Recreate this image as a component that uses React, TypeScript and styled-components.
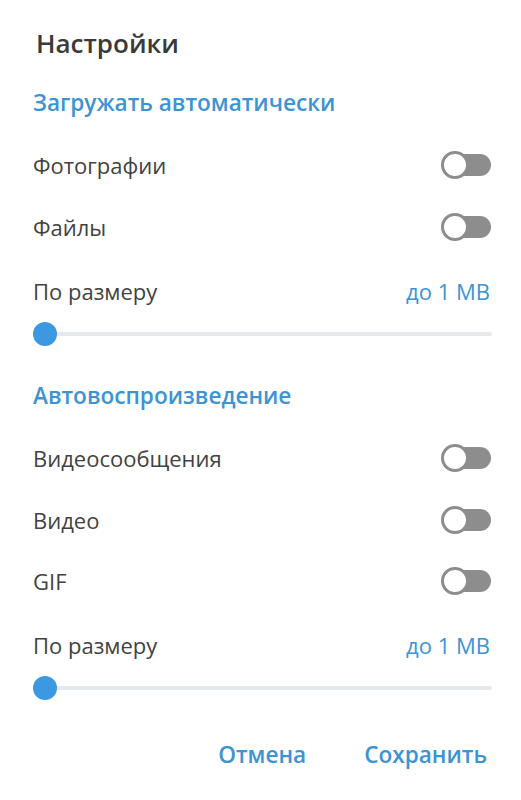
import React, { useState } from "react";
import styled, { createGlobalStyle } from "styled-components";

const GlobalStyle = createGlobalStyle`
  html, body {
    margin: 0;
    padding: 0;
    background: #ffffff;
  }
  body {
    font-family: "Open Sans", "Noto Sans", sans-serif;
    -webkit-font-smoothing: antialiased;
  }
`;

const Dialog = styled.div`
  width: 521px;
  height: 800px;
  box-sizing: border-box;
  padding: 25px 29px 0 33px;
  background: #fff;
  display: flex;
  flex-direction: column;
`;

const Title = styled.h1`
  margin: 0 0 0 3px;
  font-size: 26px;
  font-weight: 600;
  color: #3a3a3a;
  line-height: 36px;
`;

const SectionTitle = styled.h2<{ $top: number }>`
  margin: ${(p) => p.$top}px 0 0;
  font-size: 22.6px;
  font-weight: 600;
  color: #3c94d3;
  line-height: 28px;
  white-space: nowrap;
`;

const Row = styled.div<{ $top: number }>`
  display: flex;
  align-items: center;
  justify-content: space-between;
  height: 28px;
  margin-top: ${(p) => p.$top}px;
`;

const Label = styled.span`
  font-size: 22px;
  color: #424242;
  white-space: nowrap;
`;

const Value = styled.span`
  font-size: 22px;
  color: #3c94d3;
  margin-right: 2px;
  white-space: nowrap;
`;

const Switch = styled.button<{ $on: boolean }>`
  position: relative;
  width: 50px;
  height: 28px;
  margin-right: 1px;
  padding: 0;
  border: 0;
  background: transparent;
  cursor: pointer;

  &::before {
    content: "";
    position: absolute;
    left: 12px;
    right: 0;
    top: 3px;
    height: 22px;
    border-radius: 11px;
    background: ${(p) => (p.$on ? "#3c94d3" : "#8d8d8d")};
  }

  &::after {
    content: "";
    position: absolute;
    top: 0;
    left: ${(p) => (p.$on ? "22px" : "0")};
    width: 22px;
    height: 22px;
    border-radius: 50%;
    background: #fff;
    border: 3px solid ${(p) => (p.$on ? "#3c94d3" : "#8d8d8d")};
  }
`;

const SliderWrap = styled.div<{ $top: number }>`
  position: relative;
  height: 26px;
  margin-top: ${(p) => p.$top}px;
`;

const Track = styled.div`
  position: absolute;
  left: 10px;
  right: 0;
  top: 11px;
  height: 4px;
  border-radius: 2px;
  background: #e4e9ed;
`;

const Thumb = styled.div`
  position: absolute;
  top: 1px;
  width: 24px;
  height: 24px;
  border-radius: 50%;
  background: #3c98e0;
`;

const Footer = styled.div`
  display: flex;
  justify-content: flex-end;
  gap: 58px;
  margin-top: 40px;
  margin-right: 5px;
`;

const FlatButton = styled.button`
  border: 0;
  background: transparent;
  padding: 0;
  font-family: inherit;
  font-size: 22.6px;
  font-weight: 600;
  color: #3c94d3;
  cursor: pointer;
  line-height: 28px;
`;

function Toggle() {
  const [on, setOn] = useState(false);
  return <Switch $on={on} onClick={() => setOn(!on)} aria-pressed={on} />;
}

function SizeSlider({ top, value }: { top: number; value: number }) {
  return (
    <SliderWrap $top={top}>
      <Track />
      <Thumb style={{ left: `calc(${value}% - ${value * 0.24}px)` }} />
    </SliderWrap>
  );
}

export default function App() {
  return (
    <>
      <GlobalStyle />
      <Dialog>
        <Title>Настройки</Title>
        <SectionTitle $top={28}>Загружать автоматически</SectionTitle>
        <Row $top={34}>
          <Label>Фотографии</Label>
          <Toggle />
        </Row>
        <Row $top={34}>
          <Label>Файлы</Label>
          <Toggle />
        </Row>
        <Row $top={36}>
          <Label>По размеру</Label>
          <Value>до 1 MB</Value>
        </Row>
        <SizeSlider top={16} value={0} />
        <SectionTitle $top={35}>Автовоспроизведение</SectionTitle>
        <Row $top={34}>
          <Label>Видеосообщения</Label>
          <Toggle />
        </Row>
        <Row $top={34}>
          <Label>Видео</Label>
          <Toggle />
        </Row>
        <Row $top={33}>
          <Label>GIF</Label>
          <Toggle />
        </Row>
        <Row $top={36}>
          <Label>По размеру</Label>
          <Value>до 1 MB</Value>
        </Row>
        <SizeSlider top={16} value={0} />
        <Footer>
          <FlatButton>Отмена</FlatButton>
          <FlatButton>Сохранить</FlatButton>
        </Footer>
      </Dialog>
    </>
  );
}
